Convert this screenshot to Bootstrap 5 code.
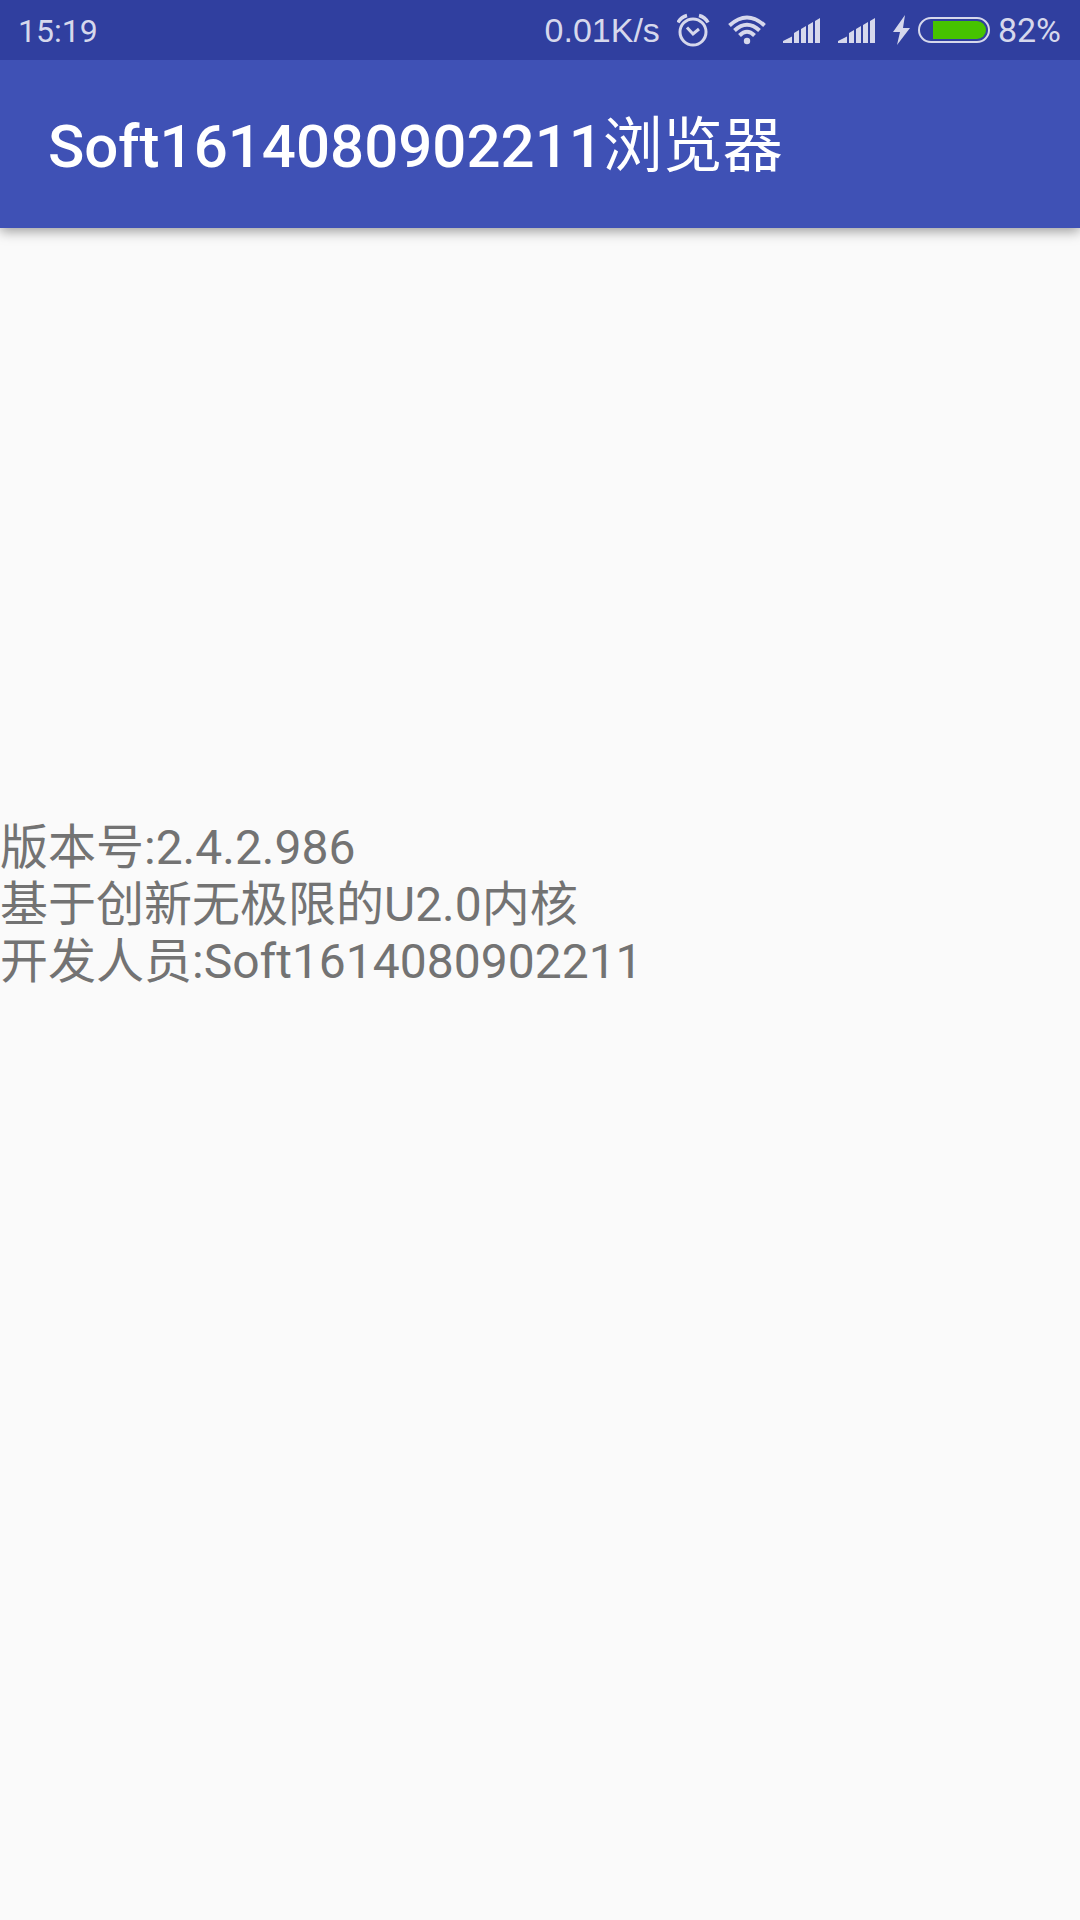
<!DOCTYPE html>
<html lang="zh-CN">
<head>
<meta charset="utf-8">
<meta name="viewport" content="width=device-width, initial-scale=1">
<title>Soft1614080902211浏览器</title>
<link rel="stylesheet" href="https://cdn.jsdelivr.net/npm/bootstrap@5.3.0/dist/css/bootstrap.min.css">
<style>
  body { background: #fafafa; color: #737373; font-family: Roboto, "Noto Sans CJK SC", sans-serif; }
  .status-bar { height: 60px; padding: 0 19px 0 18px; background: #303f9f; color: #d6d8ec; font-size: 34px; line-height: 60px; z-index: 1; }
  .status-bar svg { display: block; fill: currentColor; }
  .status-clock { font-size: 32px; padding-top: 2px; }
  .net-speed { font-family: "Liberation Sans", sans-serif; margin-right: 17px; }
  .status-icons { gap: 17px; }
  .power { gap: 8px; }
  .app-bar { height: 168px; padding: 6px 48px 0; background: #3f51b5; box-shadow: 0 3px 12px rgba(0, 0, 0, .4); }
  .app-title { font-size: 60px; line-height: 72px; font-weight: 500; color: #fff; }
  .about { padding-top: 591px; font-size: 48px; line-height: 57px; }
</style>
<script src="https://cdn.jsdelivr.net/npm/bootstrap@5.3.0/dist/js/bootstrap.bundle.min.js" defer></script>
</head>
<body>
<div class="status-bar position-relative d-flex align-items-center justify-content-between">
  <span class="status-clock">15:19</span>
  <div class="d-flex align-items-center">
    <span class="net-speed">0.01K/s</span>
    <div class="status-icons d-flex align-items-center">
      <svg width="34" height="34" viewBox="0 0 34 34" role="img" aria-label="Alarm">
        <g fill="none" stroke="currentColor" stroke-width="3">
          <circle cx="16" cy="19" r="13"/>
          <path d="M10 14.500l6 6.500 6-5"/>
          <path d="M1 9.500Q4 4 10 2.500M31 9.500Q28 4 22 2.500" stroke-width="3.500"/>
        </g>
      </svg>
      <svg width="38" height="30" viewBox="0 0 38 30" role="img" aria-label="Wi-Fi">
        <g fill="none" stroke="currentColor" stroke-width="4">
          <path d="M1.500 10.500Q19-5.500 36.500 10.500"/>
          <path d="M6.500 15.500Q19 4 31.500 15.500"/>
          <path d="M11.500 20.500Q19 13 26.500 20.500"/>
        </g>
        <circle cx="19" cy="26" r="3.200"/>
      </svg>
      <svg width="38" height="26" viewBox="0 0 38 26" role="img" aria-label="SIM 1 signal">
        <path d="M0 26v-2l9-4.500V26zM11 26V16l5-3v13zM18 26V12l5-3v17zM25 26V8l5-3v21zM32 26V4l5-3v25z"/>
      </svg>
      <svg width="38" height="26" viewBox="0 0 38 26" role="img" aria-label="SIM 2 signal">
        <path d="M0 26v-2l9-4.500V26zM11 26V16l5-3v13zM18 26V12l5-3v17zM25 26V8l5-3v21zM32 26V4l5-3v25z"/>
      </svg>
      <div class="power d-flex align-items-center">
        <svg width="17" height="30" viewBox="0 0 17 30" role="img" aria-label="Charging">
          <path d="M12 0L0 17h7L4 30 17 13h-7z"/>
        </svg>
        <svg width="72" height="26" viewBox="0 0 72 26" role="img" aria-label="Battery">
          <rect x="1" y="1" width="70" height="24" rx="12" fill="none" stroke="currentColor" stroke-width="2"/>
          <path d="M15 4h44a9 9 0 0 1 0 18H15z" fill="#46c300"/>
        </svg>
        <span>82%</span>
      </div>
    </div>
  </div>
</div>
<header class="app-bar d-flex align-items-center">
  <h1 class="app-title m-0">Soft1614080902211<span class="fw-normal">浏览器</span></h1>
</header>
<main class="about">
  <p class="m-0">版本号:2.4.2.986</p>
  <p class="m-0">基于创新无极限的U2.0内核</p>
  <p class="m-0">开发人员:Soft1614080902211</p>
</main>
</body>
</html>
